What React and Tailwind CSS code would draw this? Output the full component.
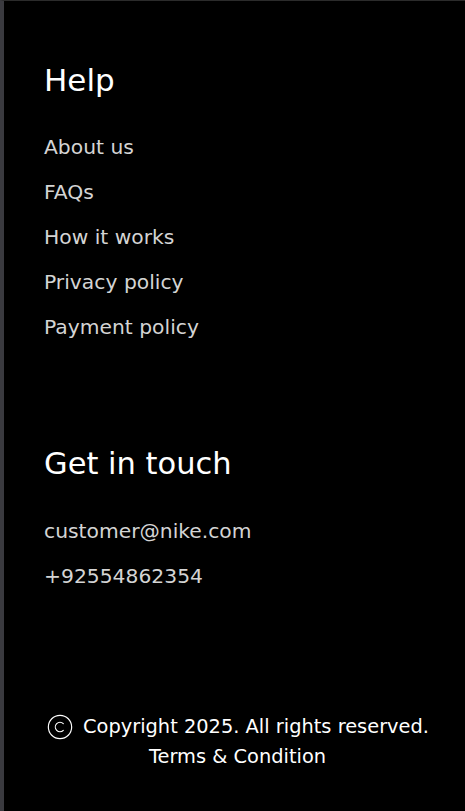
import React from 'react';
import { Copyright } from 'lucide-react';

const helpLinks = ['About us', 'FAQs', 'How it works', 'Privacy policy', 'Payment policy'];

export default function App() {
  return (
    <div
      className="min-h-[811px] bg-black border-l-4 border-t border-l-[#3a3a3f] border-t-[#2b2b2b] px-10 pt-[61px] pb-10 text-white"
      style={{ fontFamily: '"DejaVu Sans", sans-serif' }}
    >
      <h2 className="text-[31px] leading-[36px] font-normal">Help</h2>
      <ul className="mt-[27px] text-[20.3px] leading-[45px] text-[#d4d4d4]">
        {helpLinks.map((l) => (
          <li key={l}>
            <a href="#">{l}</a>
          </li>
        ))}
      </ul>

      <h2 className="mt-[96px] text-[30.5px] leading-[36px] font-normal">Get in touch</h2>
      <ul className="mt-[27px] text-[20.3px] leading-[45px] text-[#d4d4d4]">
        <li>customer@nike.com</li>
        <li>+92554862354</li>
      </ul>

      <div className="mt-[113px] flex flex-col items-center text-[19.4px] leading-[30px] translate-x-[3px]">
        <div className="flex items-center gap-[9px] whitespace-nowrap">
          <Copyright size={28} strokeWidth={1} />
          <span>Copyright 2025. All rights reserved.</span>
        </div>
        <a href="#">Terms &amp; Condition</a>
      </div>
    </div>
  );
}
